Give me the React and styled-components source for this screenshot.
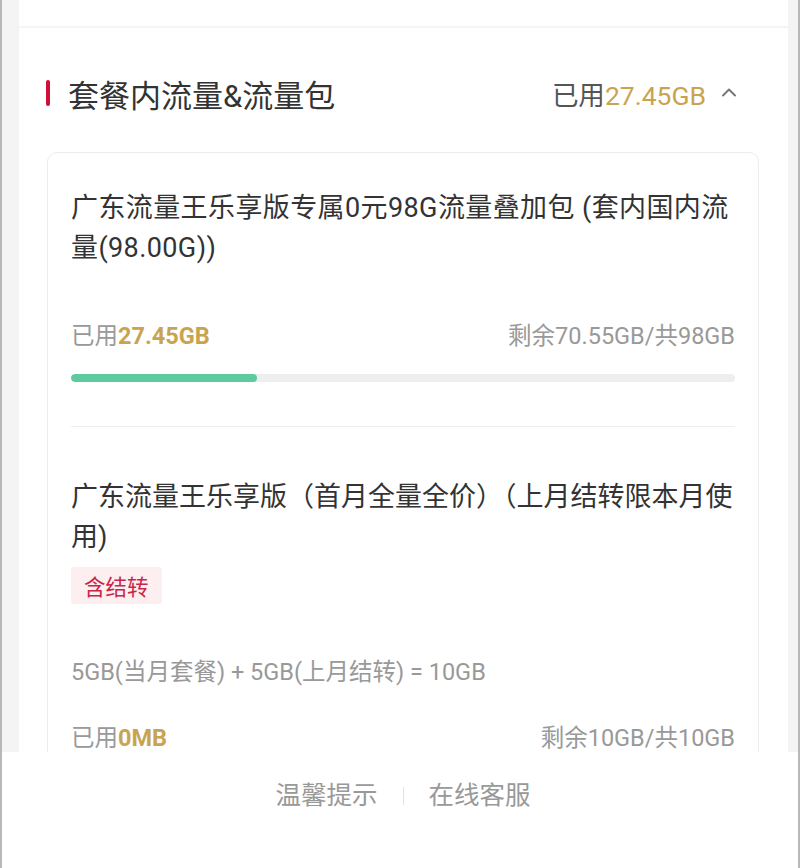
import React from 'react'
import styled, { createGlobalStyle } from 'styled-components'

const GlobalStyle = createGlobalStyle`
  html, body {
    margin: 0;
    padding: 0;
  }
  body {
    background: #f4f4f4;
    font-family: Roboto, "Noto Sans CJK SC", sans-serif;
    color: #333;
  }
`

const packs = [
  {
    id: 1,
    name: '广东流量王乐享版专属0元98G流量叠加包 (套内国内流量(98.00G))',
    spacing: 0.4,
    used: '27.45GB',
    left: '剩余70.55GB/共98GB',
    percent: 27.45 / 98,
  },
  {
    id: 2,
    name: '广东流量王乐享版（首月全量全价）（上月结转限本月使用)',
    spacing: 0,
    tag: '含结转',
    formula: '5GB(当月套餐) + 5GB(上月结转) = 10GB',
    used: '0MB',
    left: '剩余10GB/共10GB',
    percent: 0,
  },
]

const ChevronUp = () => (
  <svg width='16' height='10' viewBox='0 0 16 10'>
    <path d='M2 8.5 L8 2.5 L14 8.5' fill='none' stroke='#777' strokeWidth='2' strokeLinecap='round' strokeLinejoin='round' />
  </svg>
)

const App = () => {
  return (
    <>
      <GlobalStyle />
      <Page>
        <TopPanel />
        <Panel>
          <Header>
            <HeaderTitle>套餐内流量&amp;流量包</HeaderTitle>
            <HeaderRight>
              <span>
                已用<Gold>27.45GB</Gold>
              </span>
              <ChevronUp />
            </HeaderRight>
          </Header>
          <Card>
            {packs.map((p, i) => (
              <Item key={p.id} $first={i === 0}>
                <ItemTitle $spacing={p.spacing}>{p.name}</ItemTitle>
                {p.tag && <Tag>{p.tag}</Tag>}
                {p.formula && <Formula>{p.formula}</Formula>}
                <UsageRow $spaced={!!p.formula}>
                  <span>
                    已用<Gold $bold>{p.used}</Gold>
                  </span>
                  <span>{p.left}</span>
                </UsageRow>
                <Track>
                  <Fill style={{ width: `${p.percent * 100}%` }} />
                </Track>
              </Item>
            ))}
          </Card>
        </Panel>
      </Page>
      <Footer>
        <FooterLink>温馨提示</FooterLink>
        <FooterDivider />
        <FooterLink>在线客服</FooterLink>
      </Footer>
    </>
  )
}

const Page = styled.div`
  min-height: 868px;
  box-sizing: border-box;
  border-left: 2px solid #b8b8b8;
  border-right: 2px solid #b8b8b8;
  padding: 0 10px 0 17px;
`

const TopPanel = styled.div`
  height: 26px;
  background: #fff;
  margin-bottom: 2px;
`

const Panel = styled.div`
  background: #fff;
  padding: 42px 29px 200px 28px;
`

const Header = styled.div`
  display: flex;
  align-items: center;
  justify-content: space-between;
  height: 46px;
  padding-right: 22px;
  margin-bottom: 36px;
`

const HeaderTitle = styled.div`
  position: relative;
  padding-left: 21px;
  font-size: 31px;
  color: #333;
  &::before {
    content: '';
    position: absolute;
    left: -1px;
    top: 50%;
    width: 4px;
    height: 26px;
    margin-top: -13px;
    border-radius: 2px;
    background: #d0103a;
  }
`

const HeaderRight = styled.div`
  display: flex;
  align-items: center;
  gap: 15px;
  font-size: 26.5px;
  color: #555;
  svg {
    margin-top: -2px;
  }
`

const Gold = styled.span`
  color: #c9a450;
  font-weight: ${(p) => (p.$bold ? 700 : 400)};
`

const Card = styled.div`
  border: 1px solid #ececec;
  border-radius: 10px;
  padding: 0 23px;
`

const Item = styled.div`
  padding: ${(p) => (p.$first ? 35 : 50)}px 0 44px;
  border-top: ${(p) => (p.$first ? 'none' : '1px solid #eeeeee')};
`

const ItemTitle = styled.div`
  font-size: 27px;
  line-height: 40px;
  color: #333;
  letter-spacing: ${(p) => p.$spacing}px;
`

const Tag = styled.div`
  display: inline-flex;
  align-items: center;
  height: 37px;
  margin-top: 10px;
  padding: 0 13px;
  border-radius: 3px;
  background: #fdeef0;
  color: #c8254a;
  font-size: 21.5px;
`

const Formula = styled.div`
  margin-top: 52px;
  font-size: 23.5px;
  line-height: 32px;
  color: #999;
`

const UsageRow = styled.div`
  display: flex;
  justify-content: space-between;
  align-items: center;
  margin-top: ${(p) => (p.$spaced ? 34 : 52)}px;
  font-size: 23.5px;
  line-height: 32px;
  color: #999;
`

const Track = styled.div`
  height: 8px;
  margin-top: 22px;
  border-radius: 4px;
  background: #eeeeee;
  overflow: hidden;
`

const Fill = styled.div`
  height: 100%;
  border-radius: 4px;
  background: #5ecb9f;
`

const Footer = styled.div`
  position: fixed;
  left: 2px;
  right: 2px;
  bottom: 0;
  height: 116px;
  background: #fff;
  display: flex;
  justify-content: center;
  padding: 25px 0 0 6px;
  box-sizing: border-box;
  gap: 25px;
`

const FooterLink = styled.span`
  font-size: 25.5px;
  line-height: 36px;
  color: #999;
`

const FooterDivider = styled.span`
  width: 1px;
  height: 18px;
  margin-top: 10px;
  background: #e2e2e2;
`

export default App
